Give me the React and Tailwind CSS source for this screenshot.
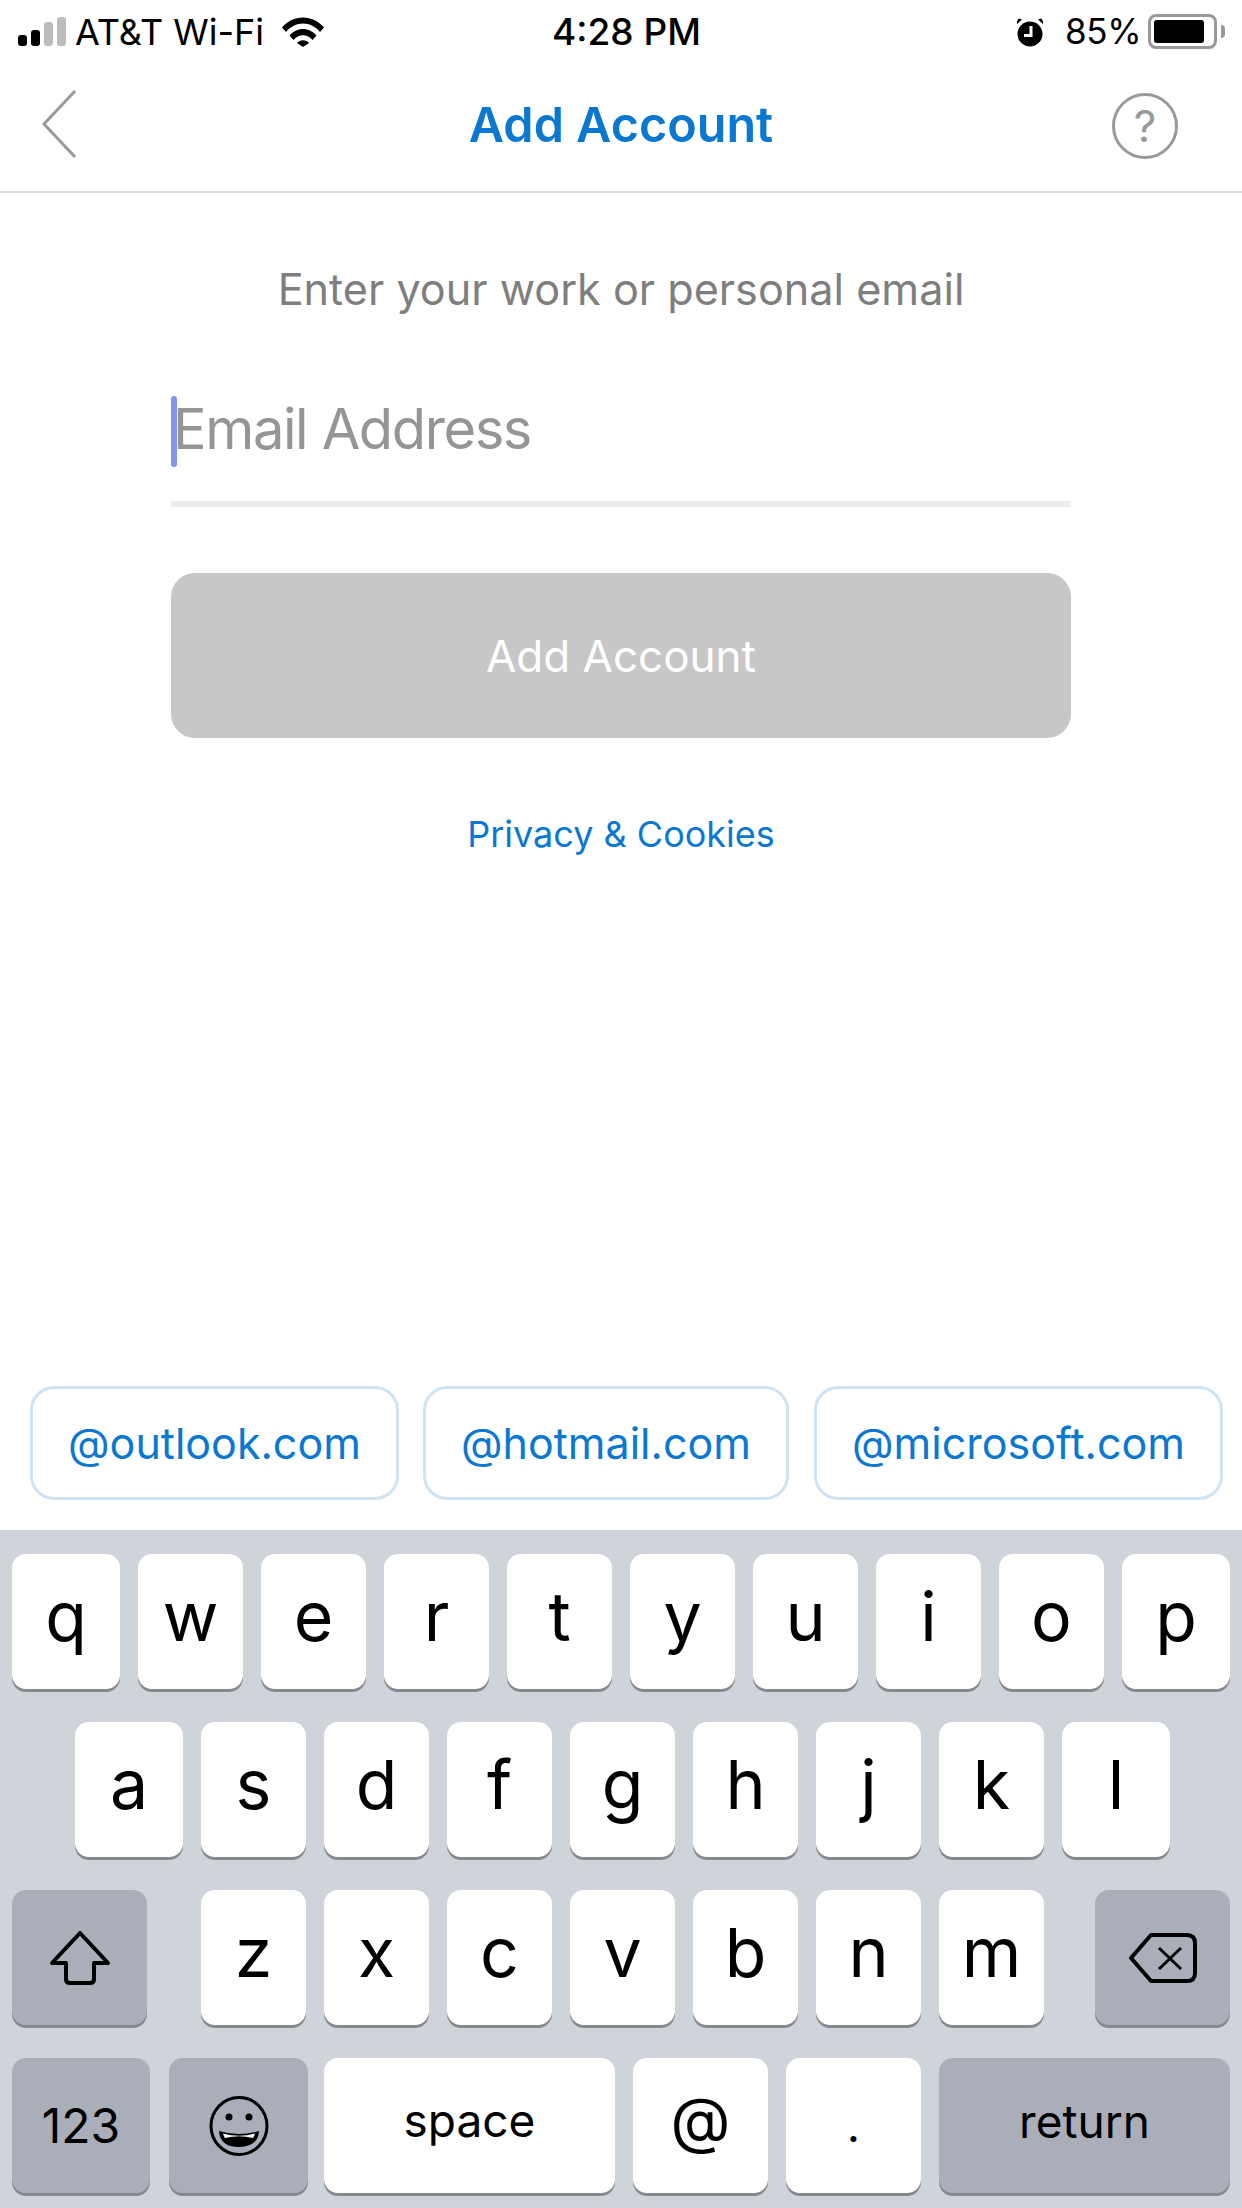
const row1 = ["w", "e", "r", "t", "y", "u", "i", "o"];
const row2 = ["s", "d", "f", "g", "h", "j", "k"];
const row3 = ["z", "x", "c", "v", "b", "n", "m"];

function Key({ children, className = "" }) {
  return (
    <div className={`flex h-[135px] shrink-0 items-center justify-center rounded-[14px] bg-white pb-[12px] text-[68px] font-[370] text-black shadow-[0_3px_0_#87888c] ${className}`}>
      {children}
    </div>
  );
}

function DarkKey({ children, className = "" }) {
  return (
    <div className={`flex h-[135px] shrink-0 items-center justify-center rounded-[14px] bg-[#a9aeb9] text-black shadow-[0_3px_0_#87888c] ${className}`}>
      {children}
    </div>
  );
}

function Chip({ children, className = "" }) {
  return (
    <div className={`flex h-[114px] items-center justify-center rounded-[24px] border-[3px] border-[#d0e3f2] text-[43px] text-[#0a78d0] ${className}`}>
      {children}
    </div>
  );
}

function Wifi() {
  return (
    <svg width="42" height="30" viewBox="0 0 42 30" fill="#000">
      <path d="M0 10.5C5.5 4 13 0.5 21 0.5S36.500 4 42 10.500L38 15C33.500 9.500 27.500 6.500 21 6.500S8.500 9.500 4 15Z" />
      <path d="M7.500 18.500C11 14.500 15.800 12 21 12S31 14.500 34.500 18.500L30.500 23C28 20 24.700 18.300 21 18.300S14 20 11.500 23Z" />
      <path d="M15 26C16.500 24.300 18.600 23.300 21 23.300S25.500 24.300 27 26L21 30Z" />
    </svg>
  );
}

function Alarm() {
  return (
    <svg width="28" height="30" viewBox="0 0 28 30">
      <circle cx="14" cy="17" r="12.500" fill="#000" />
      <path d="M1 7L6 2.500L3 1.500Q0.500 3.500 1 7Z M27 7L22 2.500L25 1.500Q27.500 3.500 27 7Z" fill="#000" />
      <path d="M15 9V18.500H8" fill="none" stroke="#fff" strokeWidth="3" />
    </svg>
  );
}

function Battery() {
  return (
    <div className="flex items-center">
      <div className="flex h-[35px] w-[69px] items-center rounded-[8px] border-[3px] border-[#999] pl-[3px]">
        <div className="h-[23px] w-[50px] rounded-[3px] bg-black" />
      </div>
      <div className="ml-[4px] h-[13px] w-[4px] rounded-r-full bg-[#999]" />
    </div>
  );
}

function Signal() {
  return (
    <div className="flex w-[48px] items-end gap-[4px]">
      <div className="h-[11px] w-[9px] rounded-[3px] bg-black" />
      <div className="h-[16px] w-[10px] rounded-[3px] bg-black" />
      <div className="h-[24px] w-[10px] rounded-[3px] bg-[#bcbcbc]" />
      <div className="h-[29px] w-[9px] rounded-[3px] bg-[#bcbcbc]" />
    </div>
  );
}

function Shift() {
  return (
    <svg width="60" height="54" viewBox="0 0 60 54" fill="none" stroke="#000" strokeWidth="4" strokeLinejoin="round">
      <path d="M30 2L58 32H44V48Q44 52 40 52H20Q16 52 16 48V32H2Z" />
    </svg>
  );
}

function Backspace() {
  return (
    <svg width="68" height="50" viewBox="0 0 68 50" fill="none" stroke="#000" strokeWidth="4" strokeLinejoin="round">
      <path d="M22 2H58Q66 2 66 10V40Q66 48 58 48H22L2 25Z" />
      <path d="M30 15L52 36M52 15L30 36" strokeWidth="3" />
    </svg>
  );
}

function Smile() {
  return (
    <svg width="60" height="60" viewBox="0 0 60 60">
      <ellipse cx="30" cy="30" rx="28" ry="28.500" fill="none" stroke="#000" strokeWidth="3" />
      <circle cx="20" cy="21" r="3.500" fill="#000" />
      <circle cx="40" cy="21" r="3.500" fill="#000" />
      <path d="M10 35Q30 41 50 35Q49 51 30 51Q11 51 10 35Z" fill="#000" />
      <path d="M14 37.500Q30 42 46 37.500Q45 41 44 42Q30 38.500 16 42Q15 41 14 37.500Z" fill="#fff" />
    </svg>
  );
}

export default function App() {
  return (
    <div className="flex h-[2208px] w-[1242px] flex-col overflow-hidden bg-white font-['Inter','Liberation_Sans',sans-serif]">
      <div className="flex h-[62px] shrink-0 items-center pl-[18px] pt-[1px] text-[36px] text-black">
        <Signal />
        <span className="ml-[9px] w-[197px] font-[370]">AT&amp;T Wi-Fi</span>
        <span className="ml-[10px]"><Wifi /></span>
        <span className="ml-[228px] w-[148px] whitespace-nowrap text-[37px] font-medium">4:28 PM</span>
        <span className="ml-[316px]"><Alarm /></span>
        <span className="ml-[21px] w-[73px] text-[35px] font-[370] tracking-[-0.3px]">85%</span>
        <span className="ml-[10px]"><Battery /></span>
      </div>

      <div className="flex h-[131px] shrink-0 items-center border-b-[2px] border-[#dadada] pl-[41px] pr-[64px]">
        <div className="flex flex-1 justify-start pb-[5px]">
          <svg width="36" height="70" viewBox="0 0 36 70" fill="none" stroke="#999" strokeWidth="3">
            <path d="M34 2L3 35L34 68" />
          </svg>
        </div>
        <h1 className="ml-[23px] pb-[2px] text-[48.500px] font-semibold text-[#0a78d0]">Add Account</h1>
        <div className="flex flex-1 justify-end pb-[2px]">
          <div className="flex h-[66px] w-[66px] items-center justify-center rounded-full border-[3px] border-[#999] text-[44px] text-[#999]">?</div>
        </div>
      </div>

      <main className="flex flex-1 flex-col items-center">
        <p className="mt-[71px] text-[43.200px] leading-[50px] font-[370] whitespace-nowrap text-[#7e7e7e]">Enter your work or personal email</p>
        <div className="mt-[64px] flex h-[129px] w-[900px] items-start border-b-[6px] border-[#ececee] pt-[18px]">
          <div className="h-[71px] w-[6px] rounded-full bg-[#7f95ee]" />
          <span className="-ml-[4px] -mt-[1px] text-[56px] leading-[68px] font-[370] tracking-[-1.4px] text-[#959595]">Email Address</span>
        </div>
        <button className="mt-[66px] h-[165px] w-[900px] rounded-[24px] bg-[#c7c7c7] text-[44px] font-[370] text-white">Add Account</button>
        <a className="mt-[73px] text-[36px] leading-[46px] text-[#0a78d0]">Privacy &amp; Cookies</a>
      </main>

      <div className="flex shrink-0 gap-[25px] pb-[30px] pl-[30px]">
        <Chip className="w-[369px]">@outlook.com</Chip>
        <Chip className="-ml-[1px] w-[366px]">@hotmail.com</Chip>
        <Chip className="w-[409px]">@microsoft.com</Chip>
      </div>

      <div className="flex h-[678px] shrink-0 flex-col gap-[33px] bg-[#cfd3da] pt-[24px]">
        <div className="flex gap-[18px] pl-[12px]">
          <Key className="w-[108px]">q</Key>
          {row1.map((k) => <Key key={k} className="w-[105px]">{k}</Key>)}
          <Key className="w-[108px]">p</Key>
        </div>
        <div className="flex gap-[18px] pl-[75px]">
          <Key className="w-[108px]">a</Key>
          {row2.map((k) => <Key key={k} className="w-[105px]">{k}</Key>)}
          <Key className="w-[108px]">l</Key>
        </div>
        <div className="flex pl-[12px] pr-[12px]">
          <DarkKey className="w-[135px]"><Shift /></DarkKey>
          <div className="ml-[54px] flex gap-[18px]">
            {row3.map((k) => <Key key={k} className="w-[105px]">{k}</Key>)}
          </div>
          <DarkKey className="ml-[51px] w-[135px]"><Backspace /></DarkKey>
        </div>
        <div className="flex pl-[12px] pr-[12px]">
          <DarkKey className="w-[138px] text-[48px] font-[370]">123</DarkKey>
          <DarkKey className="ml-[19px] w-[139px]"><Smile /></DarkKey>
          <Key className="ml-[16px] w-[291px] !pb-[10px] !text-[46px]">space</Key>
          <Key className="ml-[18px] w-[135px] !text-[62px]">@</Key>
          <Key className="ml-[18px] w-[135px] !pb-0 !text-[46px]">.</Key>
          <DarkKey className="ml-[18px] w-[291px] pb-[8px] text-[46px] font-[370]">return</DarkKey>
        </div>
      </div>
    </div>
  );
}
